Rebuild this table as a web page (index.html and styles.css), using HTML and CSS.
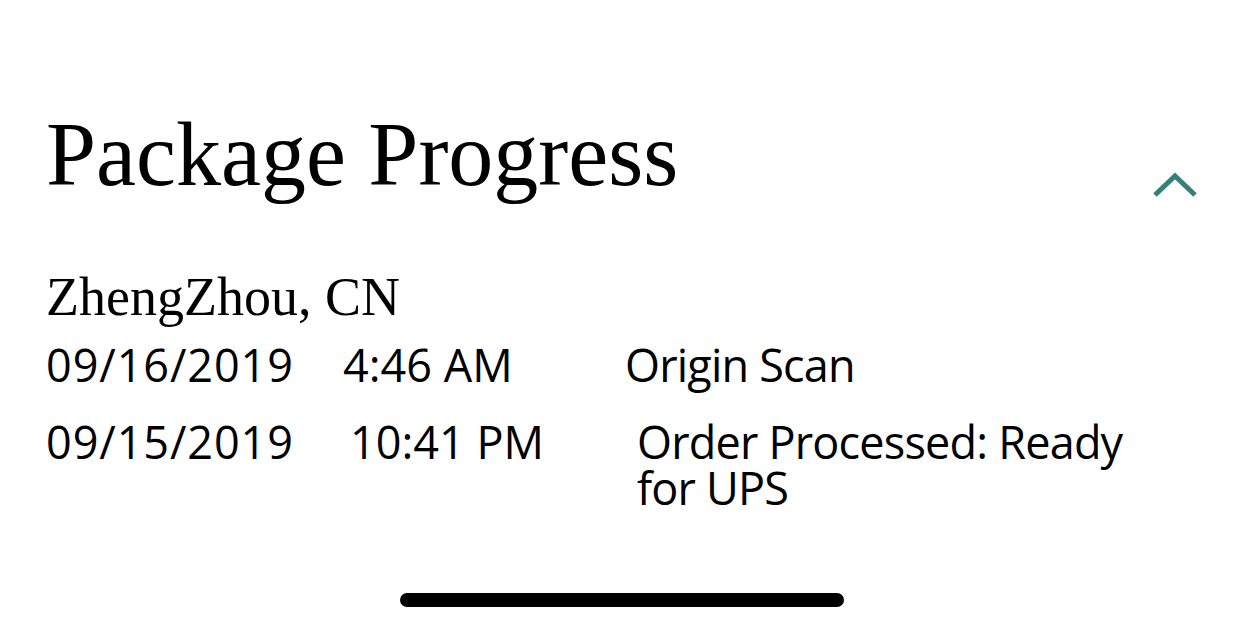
FILE: index.html
```html
<!DOCTYPE html>
<html lang="en">
<head>
    <meta charset="UTF-8">
    <meta name="viewport" content="width=device-width, initial-scale=1.0">
    <title>Package Progress</title>
    <link rel="stylesheet" href="styles.css">
</head>
<body>
    <div class="screen">
        <div class="progress-header">
            <h1>Package Progress</h1>
            <button class="collapse-btn" aria-label="Collapse">
                <svg width="46" height="28" viewBox="0 0 46 28">
                    <polyline points="3,24 23,5 43,24" fill="none" stroke="#36807a" stroke-width="5"/>
                </svg>
            </button>
        </div>

        <div class="location">ZhengZhou, CN</div>

        <div class="scan-row">
            <span class="scan-date">09/16/2019</span>
            <span class="scan-time">4:46 AM</span>
            <span class="scan-desc">Origin Scan</span>
        </div>
        <div class="scan-row scan-row--wide">
            <span class="scan-date">09/15/2019</span>
            <span class="scan-time">10:41 PM</span>
            <span class="scan-desc">Order Processed: Ready for UPS</span>
        </div>

        <div class="home-indicator"></div>
    </div>
</body>
</html>
```

FILE: styles.css
```css
body {
    margin: 0;
    background: #fff;
    color: #000;
}
.screen {
    height: 632px;
    padding: 105px 44px 0 46px;
    box-sizing: border-box;
    display: flex;
    flex-direction: column;
}
.progress-header {
    display: flex;
    justify-content: space-between;
    align-items: flex-end;
}
.progress-header h1 {
    margin: 0;
    font-family: "Liberation Serif", serif;
    font-weight: normal;
    font-size: 90px;
    line-height: 100px;
}
.collapse-btn {
    border: none;
    background: none;
    padding: 0;
    margin-bottom: 6px;
    display: flex;
}
.location {
    margin-top: 61px;
    font-family: "Liberation Serif", serif;
    font-size: 54px;
    line-height: 62px;
}
.scan-row {
    display: grid;
    grid-template-columns: 297px 282px 500px;
    font-family: "Open Sans", sans-serif;
    font-size: 45px;
    line-height: 46px;
    margin-top: 14px;
}
.scan-row--wide {
    grid-template-columns: 304px 287px 500px;
    margin-top: 31px;
}
.scan-date {
    letter-spacing: 0.9px;
}
.scan-desc {
    letter-spacing: -0.8px;
}
.home-indicator {
    width: 444px;
    height: 14px;
    border-radius: 7px;
    background: #000;
    margin: auto auto 25px;
}
```
